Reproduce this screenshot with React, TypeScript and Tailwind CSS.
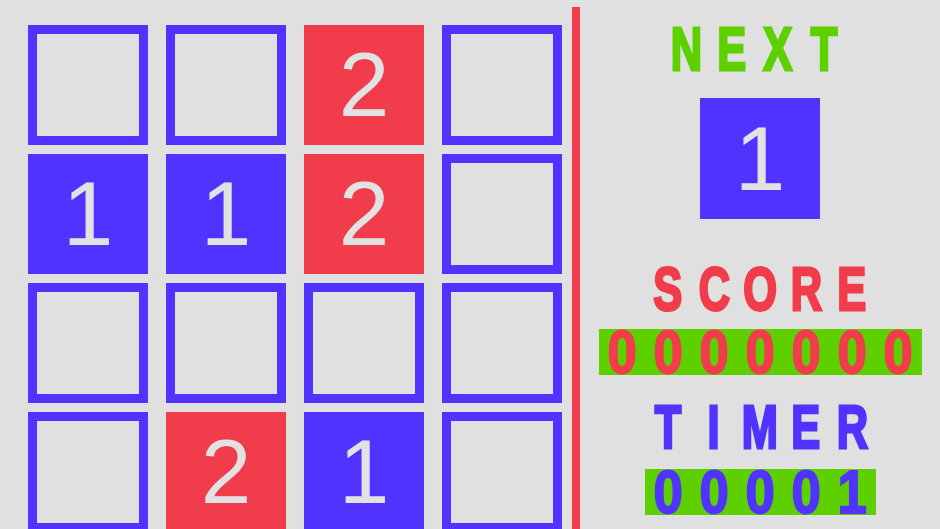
import React from "react";

type Tile = { v: 0 | 1 | 2 };

const board: Tile["v"][][] = [
  [0, 0, 2, 0],
  [1, 1, 2, 0],
  [0, 0, 0, 0],
  [0, 2, 1, 0],
];

function Cell({ v }: { v: Tile["v"] }) {
  if (v === 0) {
    return <div className="h-[120px] w-[120px] border-[9px] border-[#5033ff]" />;
  }
  const bg = v === 1 ? "bg-[#5033ff]" : "bg-[#f03c4b]";
  return (
    <div
      className={`flex h-[120px] w-[120px] items-center justify-center ${bg} font-['Liberation_Sans',Arial,sans-serif] text-[91px] leading-[120px] text-[#e2e2e2]`}
    >
      {v}
    </div>
  );
}

// Chunky arcade-style heading: each letter sits in a fixed 28px slot on a 46px pitch
function Word({ text, color, extra = "" }: { text: string; color: string; extra?: string }) {
  return (
    <div className={`flex gap-[18px] ${extra}`}>
      {text.split("").map((ch, i) => (
        <span key={i} className="flex h-[47px] w-[28px] justify-center overflow-visible">
          <span
            className={`inline-block scale-x-[0.7] font-['Liberation_Sans',Arial,sans-serif] text-[62px] font-bold leading-[47px] [-webkit-text-stroke:3px_currentColor] ${color}`}
          >
            {ch}
          </span>
        </span>
      ))}
    </div>
  );
}

// Digit strip on a green plate
function Counter({ digits, color, extra = "" }: { digits: string; color: string; extra?: string }) {
  return (
    <div className={`flex gap-[19px] bg-[#5ed000] px-[10px] ${extra}`}>
      {digits.split("").map((d, i) => (
        <span key={i} className="flex h-[46px] w-[27px] justify-center">
          <span
            className={`inline-block scale-x-[0.85] font-['Liberation_Sans',Arial,sans-serif] text-[62px] font-bold leading-[46px] [-webkit-text-stroke:2px_currentColor] ${color}`}
          >
            {d}
          </span>
        </span>
      ))}
    </div>
  );
}

export default function App() {
  return (
    <div className="flex h-[529px] w-[940px] overflow-hidden bg-[#e0e0e0]">
      <div className="grid grid-cols-[repeat(4,120px)] grid-rows-[repeat(4,120px)] gap-x-[18px] gap-y-[9px] pl-[28px] pt-[25px]">
        {board.flat().map((v, i) => (
          <Cell key={i} v={v} />
        ))}
      </div>

      <div className="ml-[10px] mt-[7px] w-[8px] bg-[#f03c4b]" />

      <div className="flex flex-1 flex-col items-center pt-[25px]">
        <Word text="NEXT" color="text-[#5ed000]" extra="mr-[10px]" />
        <div className="mt-[26px] flex h-[121px] w-[120px] items-center justify-center bg-[#5033ff] font-['Liberation_Sans',Arial,sans-serif] text-[91px] leading-[121px] text-[#e2e2e2]">
          1
        </div>
        <Word text="SCORE" color="text-[#f03c4b]" extra="mt-[46px]" />
        <Counter digits="0000000" color="text-[#f03c4b]" extra="mt-[17px]" />
        <Word text="TIMER" color="text-[#5033ff]" extra="mt-[28px]" />
        <Counter digits="00001" color="text-[#5033ff]" extra="mt-[19px]" />
      </div>
    </div>
  );
}
